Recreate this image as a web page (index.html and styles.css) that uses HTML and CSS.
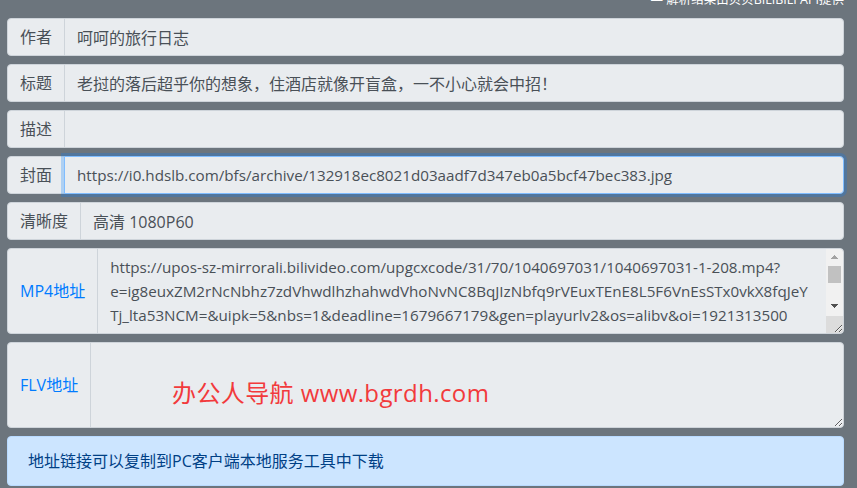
FILE: index.html
```html
<!DOCTYPE html>
<html lang="zh-CN">
<head>
<meta charset="utf-8">
<title>解析结果</title>
<link rel="stylesheet" href="styles.css">
</head>
<body>
<div class="page">
  <div class="credit">— 解析结果由贝贝BILIBILI API提供</div>

  <div class="group">
    <span class="addon">作者</span>
    <input class="field" type="text" readonly value="呵呵的旅行日志">
  </div>

  <div class="group">
    <span class="addon">标题</span>
    <input class="field" type="text" readonly value="老挝的落后超乎你的想象，住酒店就像开盲盒，一不小心就会中招！">
  </div>

  <div class="group">
    <span class="addon">描述</span>
    <input class="field" type="text" readonly value="">
  </div>

  <div class="group">
    <span class="addon">封面</span>
    <input class="field url focus" type="text" readonly value="https://i0.hdslb.com/bfs/archive/132918ec8021d03aadf7d347eb0a5bcf47bec383.jpg">
  </div>

  <div class="group">
    <span class="addon">清晰度</span>
    <input class="field" type="text" readonly value="高清 1080P60">
  </div>

  <div class="group">
    <span class="addon link">MP4地址</span>
    <textarea class="field area url scroll" rows="3" readonly>https://upos-sz-mirrorali.bilivideo.com/upgcxcode/31/70/1040697031/1040697031-1-208.mp4?
e=ig8euxZM2rNcNbhz7zdVhwdlhzhahwdVhoNvNC8BqJIzNbfq9rVEuxTEnE8L5F6VnEsSTx0vkX8fqJeY
Tj_lta53NCM=&amp;uipk=5&amp;nbs=1&amp;deadline=1679667179&amp;gen=playurlv2&amp;os=alibv&amp;oi=1921313500
&amp;trid=4f8d3b2c1e6a4d0f9b7c5a3e2d1f0a9bu&amp;mid=0&amp;platform=pc&amp;upsig=8a3e4c5d6b7f8e9a0b1c2d3e4f5a6b7c
&amp;uparams=e,uipk,nbs,deadline,gen,os,oi,trid,mid,platform&amp;bvc=vod&amp;nettype=0&amp;orderid=0,3
&amp;buvid=&amp;build=0&amp;agrr=0&amp;bw=718765&amp;logo=80000000</textarea>
  </div>

  <div class="group">
    <span class="addon link">FLV地址</span>
    <textarea class="field area" rows="3" readonly></textarea>
    <span class="watermark">办公人导航 www.bgrdh.com</span>
  </div>

  <div class="alert">地址链接可以复制到PC客户端本地服务工具中下载</div>
</div>
</body>
</html>
```

FILE: styles.css
```css
html, body {
  margin: 0;
  padding: 0;
}

body {
  background: #6c757d;
  font-family: "Open Sans", "Noto Sans CJK SC", sans-serif;
  font-size: 16px;
  line-height: 1.5;
  color: #495057;
}

.page {
  padding: 0 13px 0 7px;
}

.credit {
  margin: -7px 0 11px;
  height: 14px;
  line-height: 14px;
  font-size: 12.5px;
  color: #ffffff;
  text-align: right;
  white-space: nowrap;
}

.group {
  position: relative;
  display: flex;
  align-items: stretch;
  margin-bottom: 8px;
}

.addon {
  display: flex;
  align-items: center;
  padding: 6px 12px;
  background: #e9ecef;
  border: 1px solid #ced4da;
  border-radius: 4px 0 0 4px;
  white-space: nowrap;
  color: #495057;
}

.addon.link {
  color: #007bff;
}

.field {
  flex: 1 1 auto;
  min-width: 0;
  box-sizing: border-box;
  height: 38px;
  margin: 0 0 0 -1px;
  padding: 6px 12px;
  background: #e9ecef;
  border: 1px solid #ced4da;
  border-radius: 0 4px 4px 0;
  font-family: "Open Sans", "Noto Sans CJK SC", sans-serif;
  font-size: 16px;
  line-height: 24px;
  color: #495057;
  outline: none;
}

.field.url {
  font-size: 15.2px;
}

.field.focus {
  position: relative;
  z-index: 1;
  border-color: #80bdff;
  box-shadow: 0 0 0 3px rgba(0, 123, 255, 0.25);
}

.area {
  display: block;
  height: 86px;
  resize: vertical;
  overflow-y: auto;
}

/* scrollbar painted in the textarea background (headless hides real ones) */
.area.scroll {
  padding-right: 16px;
  background-color: #e9ecef;
  background-image:
    conic-gradient(from 135deg at 50% 0%, #a3a3a3 0deg 90deg, transparent 90deg),
    conic-gradient(from -45deg at 50% 100%, #505050 0deg 90deg, transparent 90deg),
    linear-gradient(#c1c1c1, #c1c1c1),
    linear-gradient(#f1f1f1, #f1f1f1),
    linear-gradient(#dcdcdc, #dcdcdc);
  background-repeat: no-repeat;
  background-size: 7px 4px, 7px 4px, 13px 17px, 17px 67px, 17px 17px;
  background-position:
    right 5px top 6px,
    right 5px top 55px,
    right 2px top 17px,
    right 0 top 0,
    right 0 bottom 0;
}

.watermark {
  position: absolute;
  left: 165px;
  top: 35px;
  font-size: 24px;
  line-height: 32px;
  letter-spacing: 0.4px;
  color: #f23a3c;
  white-space: nowrap;
  pointer-events: none;
}

.alert {
  padding: 12px 20px;
  background: #cce5ff;
  border: 1px solid #b8daff;
  border-radius: 4px;
  color: #004085;
}
```
